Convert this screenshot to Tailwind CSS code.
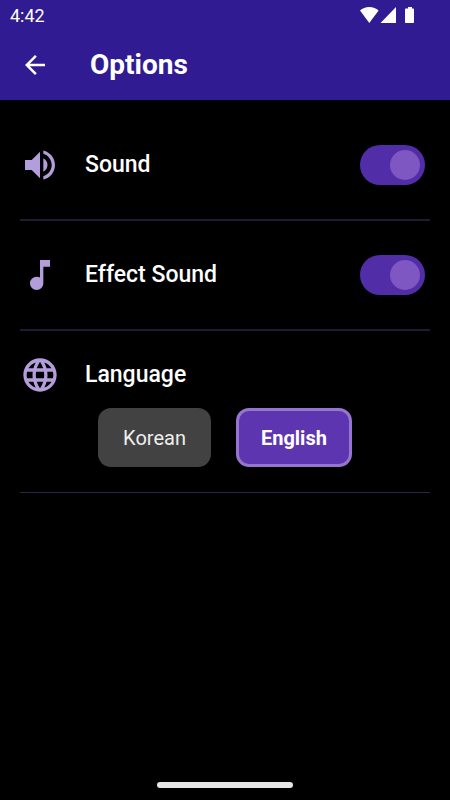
<!DOCTYPE html>
<html lang="en">
<head>
<meta charset="utf-8">
<meta name="viewport" content="width=device-width, initial-scale=1">
<title>Options</title>
<script src="https://cdn.jsdelivr.net/npm/@tailwindcss/browser@4"></script>
</head>
<body class="flex min-h-screen flex-col bg-black font-['Roboto',sans-serif] text-white">
<header class="bg-[#311b92]">
  <div class="flex h-[30px] items-center justify-between pr-[34px] pl-[10px]">
    <time class="pt-[2px] text-[18px] leading-5">4:42</time>
    <div class="flex items-center">
      <svg class="h-[18px] w-[57px]" viewBox="0 0 57 18" fill="#fff" role="img" aria-label="Wi-Fi, signal and battery">
        <path d="M1 4.600C3.500 2.200 6.500 1 10.300 1s6.800 1.200 9.300 3.600L10.300 17z"/>
        <path d="M21.500 17L37 1v16z"/>
        <path d="M49 1h4v1.500h1.200q.8 0 .8.800V16.200q0 .8-.8.800h-7.400q-.8 0-.8-.8V3.300q0-.8.8-.8H49z"/>
      </svg>
    </div>
  </div>
  <div class="flex h-[70px] items-center gap-10 px-5">
    <button type="button" aria-label="Back">
      <svg class="size-[30px]" viewBox="0 0 24 24" fill="#fff"><path d="M20 11H7.830l5.590-5.590L12 4l-8 8 8 8 1.410-1.410L7.830 13H20v-2z"/></svg>
    </button>
    <h1 class="text-[28px] leading-8 font-bold">Options</h1>
  </div>
</header>
<main class="flex-1 px-5 pt-[11px]">
  <label class="flex h-[110px] items-center border-b-2 border-[#211a30] pr-[5px]">
    <svg class="size-10" viewBox="0 0 24 24" fill="#b39ddb"><path d="M3 9v6h4l5 5V4L7 9H3zm13.500 3c0-1.770-1.020-3.290-2.500-4.030v8.050c1.480-.73 2.500-2.250 2.500-4.020zM14 3.230v2.060c2.890.86 5 3.540 5 6.710s-2.110 5.850-5 6.710v2.060c4.010-.91 7-4.490 7-8.770s-2.990-7.860-7-8.770z"/></svg>
    <span class="flex-1 pl-[25px] text-[23px] leading-8 font-medium">Sound</span>
    <input type="checkbox" role="switch" checked class="flex h-10 w-[65px] appearance-none items-center rounded-full bg-[#424242] px-[5px] before:size-[30px] before:rounded-full before:bg-[#7e57c2] checked:justify-end checked:bg-[#512da8]">
  </label>
  <label class="flex h-[110px] items-center border-b-2 border-[#211a30] pr-[5px]">
    <svg class="size-10" viewBox="0 0 24 24" fill="#b39ddb"><path d="M12 3v10.550c-.59-.34-1.270-.55-2-.55-2.210 0-4 1.790-4 4s1.790 4 4 4 4-1.790 4-4V7h4V3h-6z"/></svg>
    <span class="flex-1 pl-[25px] text-[23px] leading-8 font-medium">Effect Sound</span>
    <input type="checkbox" role="switch" checked class="flex h-10 w-[65px] appearance-none items-center rounded-full bg-[#424242] px-[5px] before:size-[30px] before:rounded-full before:bg-[#7e57c2] checked:justify-end checked:bg-[#512da8]">
  </label>
  <section class="border-b border-[#30214d] pt-6 pb-[25px]">
    <div class="flex items-center">
      <svg class="size-10" viewBox="0 0 24 24" fill="#b39ddb"><path d="M11.990 2C6.470 2 2 6.480 2 12s4.470 10 9.990 10C17.520 22 22 17.520 22 12S17.520 2 11.990 2zm6.930 6h-2.950c-.32-1.250-.78-2.450-1.380-3.560 1.840.63 3.370 1.910 4.330 3.560zM12 4.040c.83 1.200 1.480 2.530 1.910 3.960h-3.820c.43-1.430 1.080-2.760 1.910-3.960zM4.260 14C4.100 13.360 4 12.690 4 12s.1-1.360.26-2h3.380c-.08.66-.14 1.320-.14 2 0 .68.06 1.340.14 2H4.260zm.82 2h2.950c.32 1.250.78 2.450 1.380 3.560-1.840-.63-3.370-1.900-4.330-3.560zm2.950-8H5.080c.96-1.660 2.490-2.930 4.330-3.560C8.810 5.550 8.350 6.750 8.030 8zM12 19.960c-.83-1.200-1.480-2.530-1.910-3.960h3.820c-.43 1.430-1.080 2.760-1.910 3.960zM14.340 14H9.660c-.09-.66-.16-1.320-.16-2 0-.68.07-1.350.16-2h4.680c.09.65.16 1.320.16 2 0 .68-.07 1.340-.16 2zm.25 5.560c.6-1.110 1.060-2.310 1.380-3.560h2.950c-.96 1.650-2.490 2.930-4.330 3.560zM16.360 14c.08-.66.14-1.320.14-2 0-.68-.06-1.340-.14-2h3.380c.16.64.26 1.310.26 2s-.1 1.360-.26 2h-3.380z"/></svg>
      <h2 class="pl-[25px] text-[23px] leading-8 font-medium">Language</h2>
    </div>
    <div class="flex justify-center gap-[25px] pt-[13px]">
      <button type="button" aria-pressed="false" class="h-[59px] rounded-[13px] bg-[#424242] px-[25px] text-[20px] leading-6 text-[#eeeeee]">Korean</button>
      <button type="button" aria-pressed="true" class="h-[59px] rounded-[13px] border-[3px] border-[#9575cd] bg-[#5e35b1] px-[22px] text-[20px] leading-6 font-bold">English</button>
    </div>
  </section>
</main>
<footer class="flex justify-center pb-3">
  <div class="h-[6px] w-[136px] rounded-full bg-[#e6e6e6]"></div>
</footer>
</body>
</html>
